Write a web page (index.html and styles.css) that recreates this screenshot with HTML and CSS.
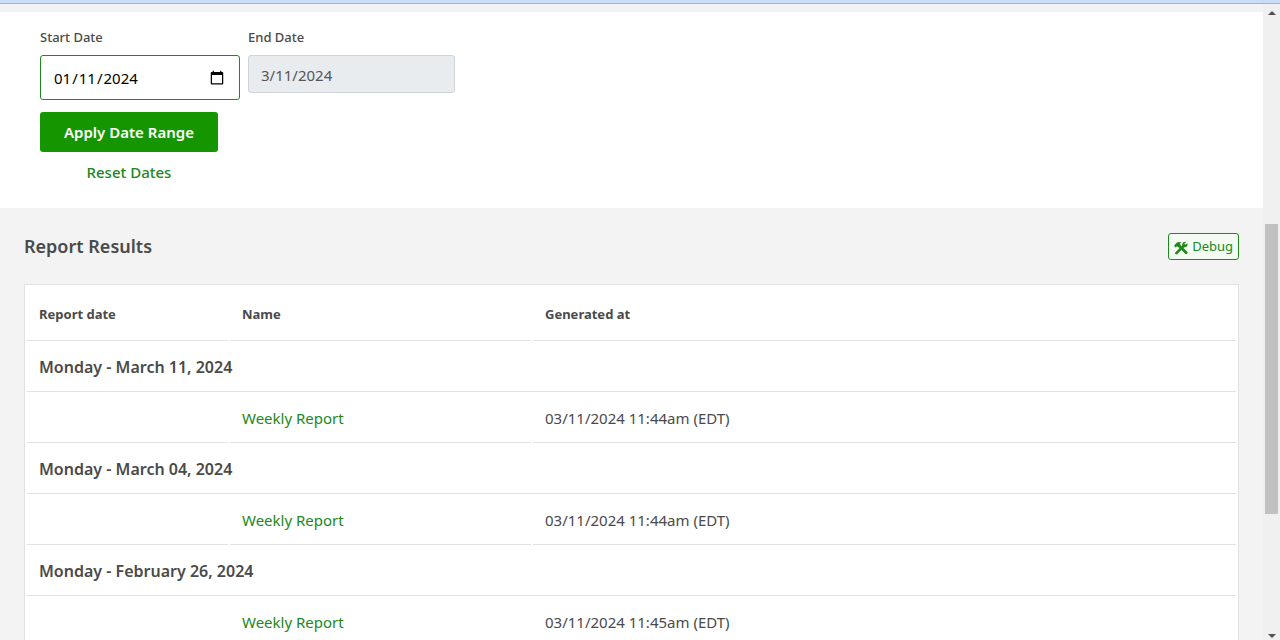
FILE: index.html
```html
<!DOCTYPE html>
<html lang="en-US">
<head>
    <meta charset="UTF-8">
    <meta name="viewport" content="width=device-width, initial-scale=1.0">
    <title>Report Results</title>
    <link rel="stylesheet" href="styles.css">
</head>
<body>
    <div class="top-strip"></div>
    <div class="viewport">
        <main class="content">
            <form class="filters">
                <div class="fields">
                    <div class="field">
                        <label for="start-date">Start Date</label>
                        <input type="date" id="start-date" class="date-input" value="2024-01-11">
                    </div>
                    <div class="field">
                        <label for="end-date">End Date</label>
                        <input type="text" id="end-date" class="text-input" value="3/11/2024" disabled>
                    </div>
                </div>
                <div class="actions">
                    <button type="button" class="btn-primary">Apply Date Range</button>
                    <a href="#" class="reset-link">Reset Dates</a>
                </div>
            </form>

            <section class="results">
                <div class="results-header">
                    <h2>Report Results</h2>
                    <button type="button" class="btn-debug">
                        <svg width="14" height="14" viewBox="0 0 14 14" aria-hidden="true">
                            <path d="M5 4.6 12.2 11.8" stroke="currentColor" stroke-width="2.8" stroke-linecap="round"/>
                            <path d="M0 4.8 2.6 1.8C4 .8 6.4.8 7.6 1.8L5.8 2.6 6.6 4.3 4.4 6.5 3.1 5.2 1.7 6.6Z" fill="currentColor"/>
                            <path d="M2.4 12.2 9.6 5" stroke="currentColor" stroke-width="2.6" stroke-linecap="round"/>
                            <path d="M12 .9 10.3 2.7 11.3 3.8 13.3 2.2C14.2 4.4 12.7 6.6 10.2 6.3L8.2 4.5C7.9 2 9.8.3 12 .9Z" fill="currentColor"/>
                        </svg>
                        <span>Debug</span>
                    </button>
                </div>

                <div class="table-wrap">
                    <table>
                        <thead>
                            <tr>
                                <th class="col-date">Report date</th>
                                <th class="col-name">Name</th>
                                <th>Generated at</th>
                            </tr>
                        </thead>
                        <tbody>
                            <tr class="group">
                                <td colspan="3">Monday - March 11, 2024</td>
                            </tr>
                            <tr>
                                <td></td>
                                <td><a href="#">Weekly Report</a></td>
                                <td>03/11/2024 11:44am (EDT)</td>
                            </tr>
                            <tr class="group">
                                <td colspan="3">Monday - March 04, 2024</td>
                            </tr>
                            <tr>
                                <td></td>
                                <td><a href="#">Weekly Report</a></td>
                                <td>03/11/2024 11:44am (EDT)</td>
                            </tr>
                            <tr class="group">
                                <td colspan="3">Monday - February 26, 2024</td>
                            </tr>
                            <tr>
                                <td></td>
                                <td><a href="#">Weekly Report</a></td>
                                <td>03/11/2024 11:45am (EDT)</td>
                            </tr>
                        </tbody>
                    </table>
                </div>
            </section>
        </main>

        <div class="scrollbar" aria-hidden="true">
            <svg class="arrow" width="8" height="4" viewBox="0 0 8 4"><path d="M0 4 4 0 8 4Z"/></svg>
            <div class="track">
                <div class="thumb"></div>
            </div>
            <svg class="arrow" width="8" height="4" viewBox="0 0 8 4"><path d="M0 0 4 4 8 0Z"/></svg>
        </div>
    </div>
</body>
</html>
```
FILE: styles.css
```css
:root {
    --green: #159500;
    --link: #21881b;
    --text: #4a4a4a;
    --line: #e2e2e2;
    --page: #f3f3f3;
}

* {
    box-sizing: border-box;
}

body {
    margin: 0;
    height: 100vh;
    overflow: hidden;
    display: flex;
    flex-direction: column;
    background: var(--page);
    color: var(--text);
    font-family: "Noto Sans", "Open Sans", sans-serif;
    font-size: 15px;
    line-height: 24px;
}

a {
    color: var(--link);
    text-decoration: none;
}

.top-strip {
    flex: none;
    height: 4px;
    background: #c9dcf8;
    border-bottom: 1px solid #a3b4cf;
}

.viewport {
    flex: 1;
    min-height: 0;
    display: flex;
}

.content {
    flex: 1;
    overflow: hidden;
    padding-top: 8px;
}

/* Date filters */
.filters {
    background: #fff;
    padding: 15px 40px 24px;
}

.fields {
    display: flex;
    align-items: flex-start;
    gap: 8px;
}

.field {
    display: flex;
    flex-direction: column;
    gap: 8px;
}

.field label {
    font-size: 13px;
    font-weight: 500;
    line-height: 20px;
}

.date-input,
.text-input {
    font-family: inherit;
    font-size: 15px;
    padding: 0 12px;
    border-radius: 3px;
}

.date-input {
    width: 200px;
    height: 45px;
    border: 1px solid var(--link);
    background: #fff;
    color: #000;
}

.date-input::-webkit-calendar-picker-indicator {
    width: 16px;
    height: 16px;
}

.text-input {
    width: 207px;
    height: 38px;
    padding-top: 2px;
    border: 1px solid #ced4da;
    background: #e9ecef;
    color: #555;
}

.actions {
    display: inline-flex;
    flex-direction: column;
    align-items: center;
    gap: 8px;
    margin-top: 12px;
    vertical-align: top;
}

.btn-primary {
    height: 40px;
    padding: 0 24px;
    border: none;
    border-radius: 3px;
    background: var(--green);
    color: #fff;
    font-family: inherit;
    font-size: 15px;
    font-weight: 600;
    cursor: pointer;
}

.reset-link {
    font-weight: 500;
}

/* Results */
.results {
    padding: 24px;
}

.results-header {
    display: flex;
    justify-content: space-between;
    align-items: center;
    margin-bottom: 24px;
}

.results-header h2 {
    margin: 0;
    font-size: 18px;
    font-weight: 600;
    line-height: 28px;
}

.btn-debug {
    display: flex;
    align-items: center;
    gap: 4px;
    height: 27px;
    padding: 0 5px;
    border: 1px solid var(--link);
    border-radius: 3px;
    background: #f3fbf2;
    color: var(--link);
    font-family: inherit;
    font-size: 13px;
    cursor: pointer;
}

.btn-debug svg {
    margin-top: 3px;
    fill: none;
}

.table-wrap {
    background: #fff;
    border: 1px solid var(--line);
}

table {
    width: 100%;
    table-layout: fixed;
    border-collapse: separate;
    border-spacing: 2px;
}

th,
td {
    padding: 12px;
    border-bottom: 1px solid var(--line);
    text-align: left;
}

th {
    padding: 15px 12px 14px;
    font-size: 13px;
    font-weight: 700;
}

.col-date {
    width: 201px;
}

.col-name {
    width: 301px;
}

.group td {
    font-size: 16px;
    font-weight: 600;
}

/* Scrollbar */
.scrollbar {
    flex: none;
    width: 17px;
    padding: 7px 0 2px;
    display: flex;
    flex-direction: column;
    align-items: center;
    background: #f0f0f0;
}

.arrow {
    fill: #505050;
}

.track {
    flex: 1;
    padding: 0 2px;
    width: 100%;
    display: flex;
    flex-direction: column;
}

.track::before {
    content: "";
    flex: 209;
}

.thumb {
    flex: 290;
    background: #c1c1c1;
}

.track::after {
    content: "";
    flex: 120;
}
```
